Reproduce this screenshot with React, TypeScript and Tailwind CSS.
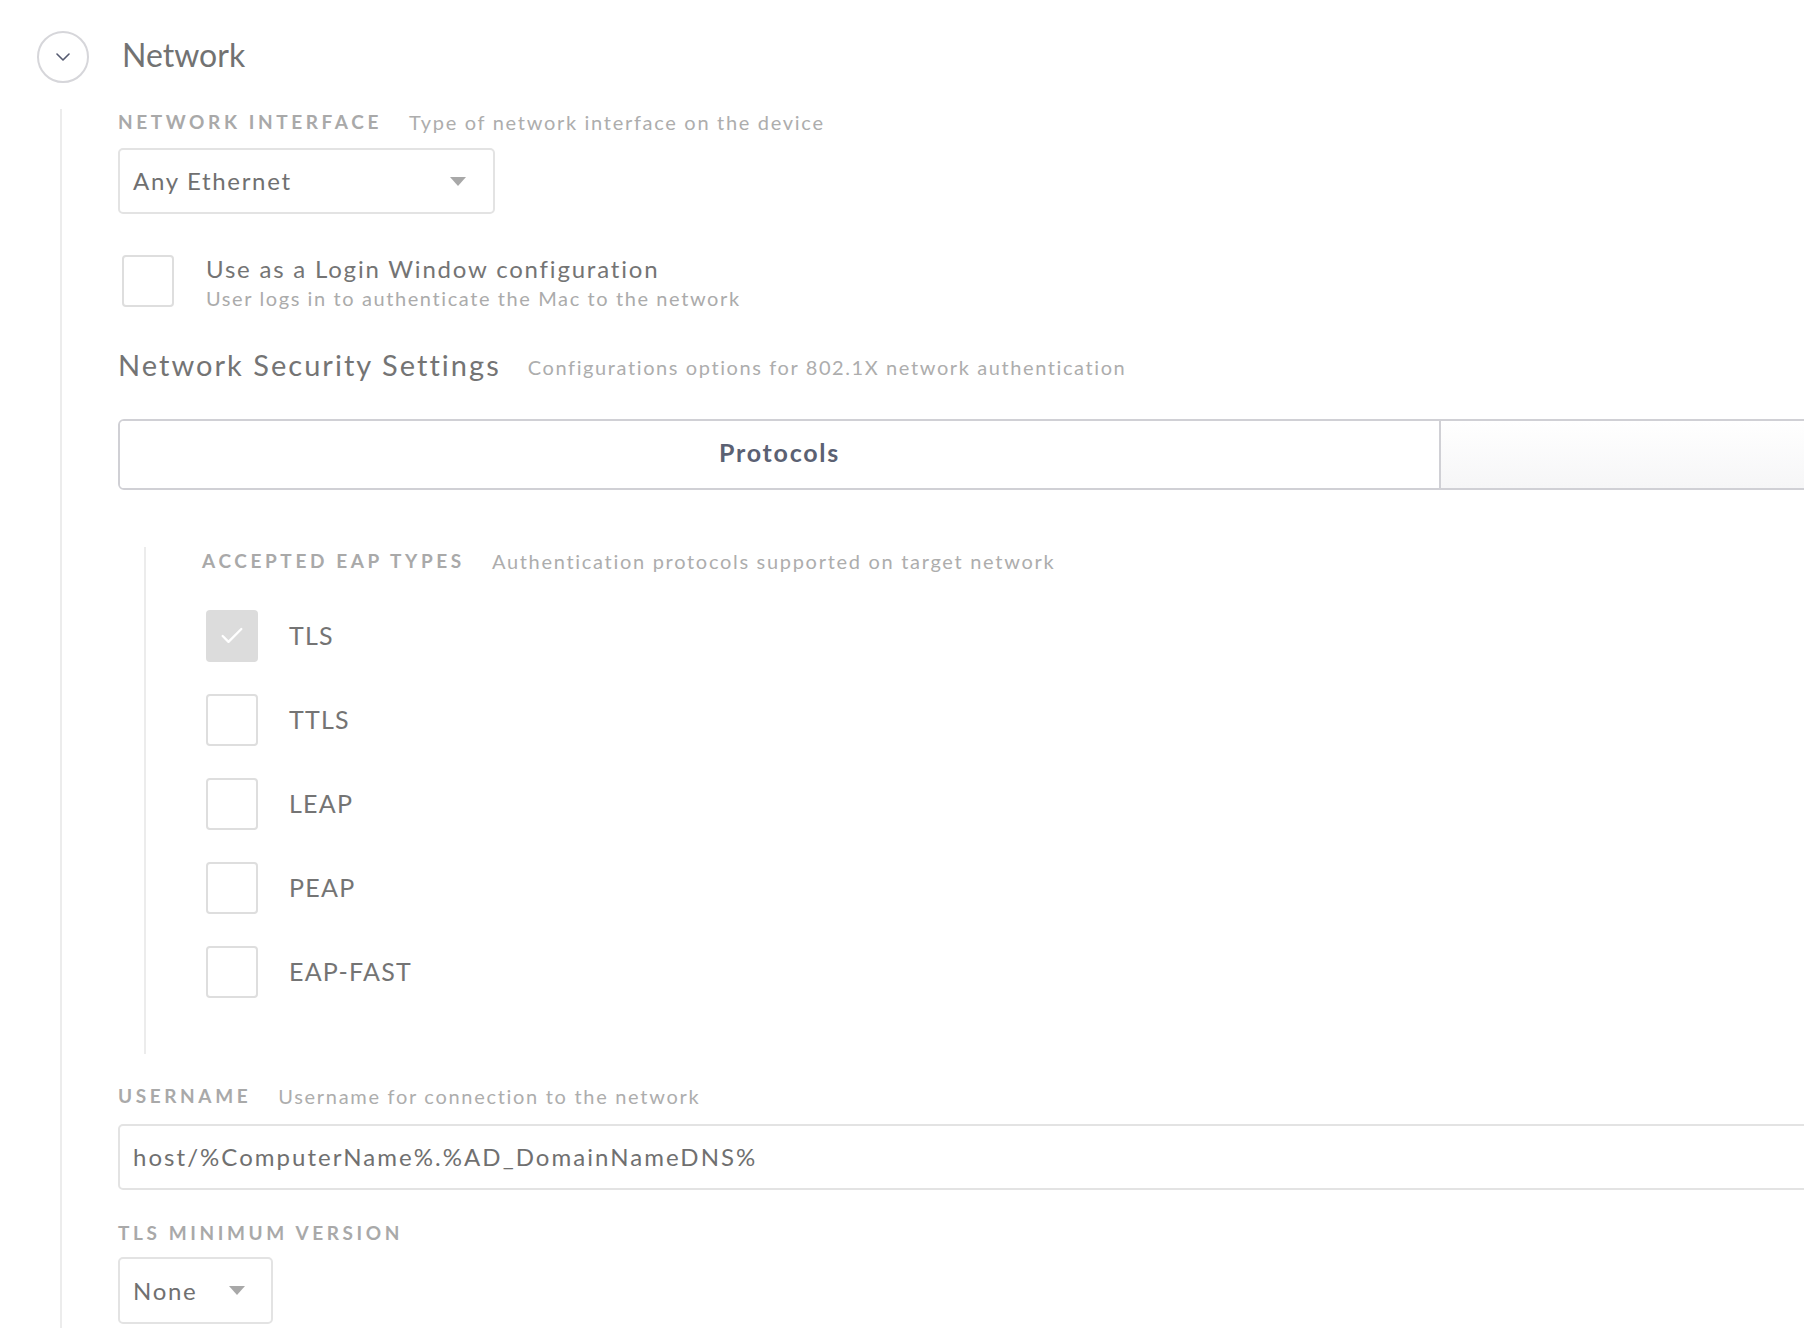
import { Check } from "lucide-react";

const Label = ({ title, desc }: { title: string; desc?: string }) => (
  <div className="flex h-[26px] items-center gap-[27px]">
    <span className="text-[19px] font-bold uppercase tracking-[0.19em] text-[#a9a9a9]">
      {title}
    </span>
    {desc && <span className="text-[20px] tracking-[0.085em] text-[#adadad]">{desc}</span>}
  </div>
);

const Arrow = () => (
  <svg width="16" height="9" viewBox="0 0 16 9">
    <path d="M0 0 H16 L8 9 Z" fill="#a8a8a8" />
  </svg>
);

const Box = ({ checked }: { checked?: boolean }) => (
  <div
    className={`flex h-[52px] w-[52px] shrink-0 items-center justify-center rounded-[4px] ${
      checked ? "bg-[#dcdcdc]" : "border-2 border-[#dedede] bg-white"
    }`}
  >
    {checked && <Check size={28} strokeWidth={2} color="#ffffff" />}
  </div>
);

const eapTypes = [
  { name: "TLS", checked: true },
  { name: "TTLS" },
  { name: "LEAP" },
  { name: "PEAP" },
  { name: "EAP-FAST" },
];

export default function App() {
  return (
    <div className="h-[1328px] w-[1804px] overflow-hidden bg-white font-[Lato]">
      <div className="w-[2800px] pl-[37px] pt-[31px]">
        {/* Header */}
        <div className="flex items-center gap-[33px]">
          <div className="flex h-[52px] w-[52px] items-center justify-center rounded-full border-2 border-[#d6d6da]">
            <svg width="14" height="8" viewBox="0 0 14 8">
              <path
                d="M1 1 L7 7 L13 1"
                fill="none"
                stroke="#555a70"
                strokeWidth="1.6"
                strokeLinecap="round"
                strokeLinejoin="round"
              />
            </svg>
          </div>
          <h1 className="-mt-[4px] text-[32px] text-[#727272]">Network</h1>
        </div>

        {/* Body */}
        <div className="ml-[23px] mt-[26px] border-l-2 border-[#ececec] pb-[10px] pl-[56px]">
          <Label title="Network Interface" desc="Type of network interface on the device" />

          <div className="mt-[13px] flex h-[66px] w-[377px] items-center justify-between rounded-[5px] border-2 border-[#e3e3e3] pl-[13px] pr-[27px]">
            <span className="text-[24px] tracking-[0.07em] text-[#707070]">Any Ethernet</span>
            <Arrow />
          </div>

          {/* Login window */}
          <div className="mt-[41px] flex items-start gap-[32px] pl-[4px]">
            <Box />
            <div className="-mt-[1px]">
              <div className="text-[24px] leading-[30px] tracking-[0.075em] text-[#747474]">
                Use as a Login Window configuration
              </div>
              <div className="text-[20px] leading-[28px] tracking-[0.08em] text-[#ababab]">
                User logs in to authenticate the Mac to the network
              </div>
            </div>
          </div>

          {/* Security settings */}
          <div className="mt-[33px] flex h-[40px] items-center gap-[27px]">
            <span className="text-[29px] tracking-[0.07em] text-[#747474]">Network Security Settings</span>
            <span className="mt-[4px] text-[20px] tracking-[0.08em] text-[#adadad]">
              Configurations options for 802.1X network authentication
            </span>
          </div>

          {/* Tabs */}
          <div className="mt-[34px] flex h-[71px] w-[2644px] overflow-hidden rounded-[6px] border-2 border-[#d0d0d5]">
            <div className="flex flex-1 items-center justify-center bg-white">
              <span className="-mt-[3px] text-[25px] font-bold tracking-[0.07em] text-[#5b6173]">Protocols</span>
            </div>
            <div className="flex-1 border-l-2 border-[#d0d0d5] bg-gradient-to-b from-white to-[#f6f6f7]" />
          </div>

          {/* EAP types */}
          <div className="ml-[26px] mt-[57px] border-l-2 border-[#ececec] pb-[56px] pl-[56px]">
            <div className="flex h-[28px] items-center">
              <Label
                title="Accepted EAP Types"
                desc="Authentication protocols supported on target network"
              />
            </div>
            <div className="mt-[35px] flex flex-col gap-[32px] pl-[4px]">
              {eapTypes.map((t) => (
                <div key={t.name} className="flex items-center gap-[31px]">
                  <Box checked={t.checked} />
                  <span className="text-[25px] tracking-[0.05em] text-[#747474]">{t.name}</span>
                </div>
              ))}
            </div>
          </div>

          {/* Username */}
          <div className="mt-[29px]">
            <Label title="Username" desc="Username for connection to the network" />
          </div>
          <div className="mt-[15px] flex h-[66px] w-[2644px] items-center rounded-[5px] border-2 border-[#e3e3e3] pl-[13px]">
            <span className="text-[24px] tracking-[0.085em] text-[#707070]">
              host/%ComputerName%.%AD_DomainNameDNS%
            </span>
          </div>

          {/* TLS minimum */}
          <div className="mt-[30px]">
            <Label title="TLS Minimum Version" />
          </div>
          <div className="mt-[11px] flex h-[67px] w-[155px] items-center justify-between rounded-[5px] border-2 border-[#e3e3e3] pl-[13px] pr-[26px]">
            <span className="text-[24px] tracking-[0.07em] text-[#707070]">None</span>
            <Arrow />
          </div>
        </div>
      </div>
    </div>
  );
}
